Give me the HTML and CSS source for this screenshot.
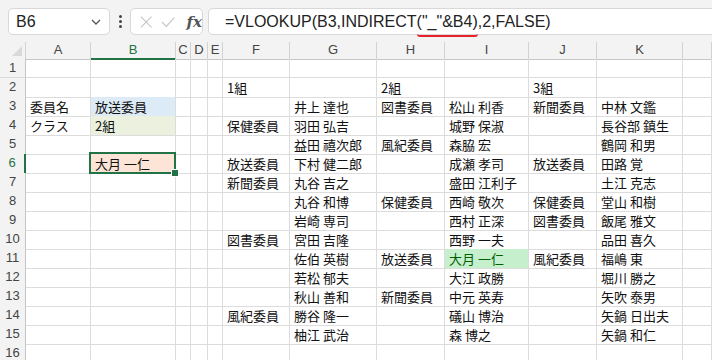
FILE: index.html
```html
<!DOCTYPE html>
<html lang="ja">
<head>
  <meta charset="UTF-8" />
  <title>VLOOKUP INDIRECT</title>
  <link rel="stylesheet" href="styles.css">
</head>
<body>

  <div class="toolbar">
    <div class="namebox">
      <span>B6</span>
      <svg width="12" height="8" viewBox="0 0 12 8"><path d="M2 2 L6 6 L10 2" fill="none" stroke="#555" stroke-width="1.3"/></svg>
    </div>
    <div class="dots"><i></i><i></i><i></i></div>
    <div class="fxbox">
      <svg width="14" height="14" viewBox="0 0 14 14"><path d="M1 1 L13 13 M13 1 L1 13" stroke="#c4c4c4" stroke-width="1.2"/></svg>
      <svg width="16" height="14" viewBox="0 0 16 14"><path d="M1 7 L6 12 L15 2" fill="none" stroke="#c4c4c4" stroke-width="1.2"/></svg>
      <span class="fx">fx</span>
    </div>
    <div class="formula">=VLOOKUP(B3,INDIRECT<span class="mark">("_"&amp;B4)</span>,2,FALSE)</div>
  </div>

  <div class="sheet">
    <div class="row head">
      <span class="corner"><i></i></span><span>A</span><span class="on">B</span><span>C</span><span>D</span><span>E</span><span>F</span><span>G</span><span>H</span><span>I</span><span>J</span><span>K</span><span></span>
    </div>
    <div class="row"><span class="rh">1</span><span></span><span></span><span></span><span></span><span></span><span></span><span></span><span></span><span></span><span></span><span></span><span></span></div>
    <div class="row"><span class="rh">2</span><span></span><span></span><span></span><span></span><span></span><span>1組</span><span></span><span>2組</span><span></span><span>3組</span><span></span><span></span></div>
    <div class="row"><span class="rh">3</span><span>委員名</span><span class="blue">放送委員</span><span></span><span></span><span></span><span></span><span>井上 達也</span><span>図書委員</span><span>松山 利香</span><span>新聞委員</span><span>中林 文鑑</span><span></span></div>
    <div class="row"><span class="rh">4</span><span>クラス</span><span class="green">2組</span><span></span><span></span><span></span><span>保健委員</span><span>羽田 弘吉</span><span></span><span>城野 保淑</span><span></span><span>長谷部 鎮生</span><span></span></div>
    <div class="row"><span class="rh">5</span><span></span><span></span><span></span><span></span><span></span><span></span><span>益田 禧次郎</span><span>風紀委員</span><span>森脇 宏</span><span></span><span>鶴岡 和男</span><span></span></div>
    <div class="row"><span class="rh on">6</span><span></span><span class="sel">大月 一仁</span><span></span><span></span><span></span><span>放送委員</span><span>下村 健二郎</span><span></span><span>成瀬 孝司</span><span>放送委員</span><span>田路 覚</span><span></span></div>
    <div class="row"><span class="rh">7</span><span></span><span></span><span></span><span></span><span></span><span>新聞委員</span><span>丸谷 吉之</span><span></span><span>盛田 江利子</span><span></span><span>土江 克志</span><span></span></div>
    <div class="row"><span class="rh">8</span><span></span><span></span><span></span><span></span><span></span><span></span><span>丸谷 和博</span><span>保健委員</span><span>西崎 敬次</span><span>保健委員</span><span>堂山 和樹</span><span></span></div>
    <div class="row"><span class="rh">9</span><span></span><span></span><span></span><span></span><span></span><span></span><span>岩崎 専司</span><span></span><span>西村 正深</span><span>図書委員</span><span>飯尾 雅文</span><span></span></div>
    <div class="row"><span class="rh">10</span><span></span><span></span><span></span><span></span><span></span><span>図書委員</span><span>宮田 吉隆</span><span></span><span>西野 一夫</span><span></span><span>品田 喜久</span><span></span></div>
    <div class="row"><span class="rh">11</span><span></span><span></span><span></span><span></span><span></span><span></span><span>佐伯 英樹</span><span>放送委員</span><span class="hit">大月 一仁</span><span>風紀委員</span><span>福嶋 東</span><span></span></div>
    <div class="row"><span class="rh">12</span><span></span><span></span><span></span><span></span><span></span><span></span><span>若松 郁夫</span><span></span><span>大江 政勝</span><span></span><span>堀川 勝之</span><span></span></div>
    <div class="row"><span class="rh">13</span><span></span><span></span><span></span><span></span><span></span><span></span><span>秋山 善和</span><span>新聞委員</span><span>中元 英寿</span><span></span><span>矢吹 泰男</span><span></span></div>
    <div class="row"><span class="rh">14</span><span></span><span></span><span></span><span></span><span></span><span>風紀委員</span><span>勝谷 隆一</span><span></span><span>礒山 博治</span><span></span><span>矢鍋 日出夫</span><span></span></div>
    <div class="row"><span class="rh">15</span><span></span><span></span><span></span><span></span><span></span><span></span><span>柚江 武治</span><span></span><span>森 博之</span><span></span><span>矢鍋 和仁</span><span></span></div>
    <div class="row"><span class="rh">16</span><span></span><span></span><span></span><span></span><span></span><span></span><span></span><span></span><span></span><span></span><span></span><span></span></div>
  </div>

</body>
</html>
```

FILE: styles.css
```css
* {
  box-sizing: border-box;
}
body {
  margin: 0;
  background: #fff;
  overflow: hidden;
  font-family: "Noto Sans CJK JP", sans-serif;
}
.toolbar {
  height: 42px;
  background: #f3f3f3;
  display: flex;
  align-items: flex-start;
  padding: 8px 0 0 8px;
  overflow: hidden;
}
.namebox {
  width: 102px;
  height: 27px;
  background: #fff;
  border: 1px solid #d8d8d8;
  border-radius: 5px;
  display: flex;
  align-items: center;
  justify-content: space-between;
  padding: 0 7px 0 7px;
  font: 16px "Liberation Sans", sans-serif;
  color: #222;
}
.dots {
  width: 20px;
  height: 27px;
  display: flex;
  flex-direction: column;
  align-items: center;
  justify-content: center;
  gap: 2px;
}
.dots i {
  width: 3px;
  height: 3px;
  background: #444;
  border-radius: 50%;
}
.fxbox {
  width: 73px;
  height: 27px;
  background: #fff;
  border: 1px solid #d8d8d8;
  border-radius: 5px;
  display: flex;
  align-items: center;
  gap: 9px;
  padding-left: 9px;
}
.fx {
  font: italic bold 15px "DejaVu Serif", serif;
  color: #555;
  margin-left: 2px;
}
.formula {
  flex: 1;
  margin-left: 5px;
  margin-right: -10px;
  height: 27px;
  background: #fff;
  border: 1px solid #d8d8d8;
  border-radius: 5px;
  padding-left: 16px;
  font: 16px/25px "Liberation Sans", sans-serif;
  color: #222;
  white-space: nowrap;
}
.mark {
  border-bottom: 2px solid #e8242a;
  border-radius: 0 0 3px 3px;
  padding-bottom: 5px;
}

.row {
  display: grid;
  grid-template-columns: 26px 65px 85px 15px 17px 15px 67px 87px 68px 84px 68px 86px 1fr;
  height: 19px;
}
.row > span {
  border-right: 1px solid #dcdcdc;
  border-bottom: 1px solid #dcdcdc;
  font-size: 13px;
  line-height: 19px;
  padding: 0 4px;
  white-space: nowrap;
  color: #111;
}
.row.head {
  height: 17px;
}
.row.head > span {
  background: #f3f3f3;
  border-right-color: #d2d2d2;
  border-bottom-color: #c6c6c6;
  text-align: center;
  font: 13px/16px "Liberation Sans", sans-serif;
  color: #444;
  padding: 0;
}
.row.head > span.on {
  color: #217346;
  border-bottom: 2px solid #217346;
}
.corner {
  display: flex;
  justify-content: flex-end;
  align-items: flex-end;
  padding: 0 3px 3px 0 !important;
}
.corner i {
  width: 0;
  height: 0;
  border-left: 10px solid transparent;
  border-bottom: 10px solid #d9d9d9;
}
.row > span.rh {
  background: #f3f3f3;
  border-right-color: #c6c6c6;
  border-bottom-color: #d8d8d8;
  text-align: center;
  font: 13px/18px "Liberation Sans", sans-serif;
  color: #444;
  padding: 0;
}
.row > span.rh.on {
  color: #217346;
  border-right: 2px solid #217346;
}
.blue {
  background: #ddebf7;
}
.green {
  background: #ebf1de;
}
.hit {
  background: #c6efce;
  color: #006100 !important;
}
.sel {
  background: #fce4d6;
  position: relative;
}
.sel::after {
  content: "";
  position: absolute;
  top: -2px;
  left: -2px;
  right: -1px;
  bottom: -1px;
  border: 2px solid #217346;
}
.sel::before {
  content: "";
  position: absolute;
  right: -4px;
  bottom: -4px;
  width: 6px;
  height: 6px;
  background: #217346;
  border: 1px solid #fff;
  z-index: 1;
}
```
